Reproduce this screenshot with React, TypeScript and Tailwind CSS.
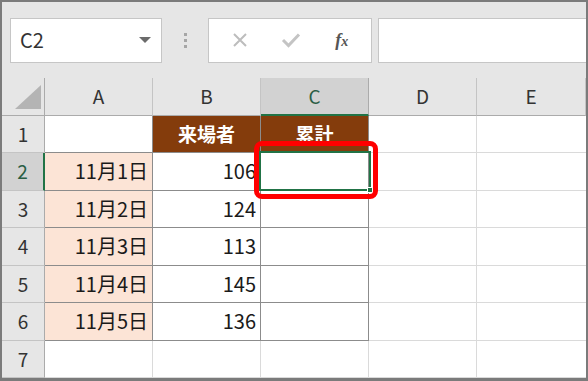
const font = { fontFamily: '"Noto Sans CJK JP", "Noto Sans", sans-serif' };

const cols = ['A', 'B', 'C', 'D', 'E'];

const rows = [
  { n: '1', a: '', b: '来場者', c: '累計' },
  { n: '2', a: '11月1日', b: '106', c: '' },
  { n: '3', a: '11月2日', b: '124', c: '' },
  { n: '4', a: '11月3日', b: '113', c: '' },
  { n: '5', a: '11月4日', b: '145', c: '' },
  { n: '6', a: '11月5日', b: '136', c: '' },
  { n: '7', a: '', b: '', c: '' },
];

function Toolbar() {
  return (
    <div className="h-[76px] flex items-center bg-[#e6e6e6] pl-[8px] shrink-0">
      {/* Name box */}
      <div className="w-[152px] h-[45px] bg-white border border-[#c6c6c6] flex items-center justify-between pl-[9px] pr-[10px]">
        <span className="text-[20px] text-[#333] leading-none">C2</span>
        <svg width="12" height="7" viewBox="0 0 12 7">
          <polygon points="0,0 12,0 6,6" fill="#6b6b6b" />
        </svg>
      </div>

      {/* Separator dots */}
      <div className="w-[46px] flex flex-col items-center gap-[3px]">
        <span className="w-[3px] h-[3px] bg-[#a6a6a6]" />
        <span className="w-[3px] h-[3px] bg-[#a6a6a6]" />
        <span className="w-[3px] h-[3px] bg-[#a6a6a6]" />
      </div>

      {/* Cancel / enter / fx */}
      <div className="w-[164px] h-[45px] bg-white border border-[#c6c6c6] flex items-center justify-around px-[6px]">
        <svg width="16" height="16" viewBox="0 0 16 16">
          <path d="M2 2 L14 14 M14 2 L2 14" stroke="#bdbdbd" strokeWidth="2" />
        </svg>
        <svg width="20" height="16" viewBox="0 0 20 16">
          <path d="M2 8 L7.5 13.5 L18 2.5" stroke="#c4c4c4" strokeWidth="3" fill="none" />
        </svg>
        <span className="text-[18px] italic font-bold text-[#555] leading-none" style={{ fontFamily: '"Liberation Serif", serif' }}>
          f<span className="text-[14px]">x</span>
        </span>
      </div>

      {/* Formula input */}
      <div className="flex-1 h-[45px] ml-[6px] bg-white border-y border-l border-[#c6c6c6]" />
    </div>
  );
}

function Grid() {
  return (
    <div className="relative flex-1 grid grid-cols-[43px_108px_108px_108px_108px_1fr] grid-rows-8 bg-white text-[#1a1a1a]">
      {/* Corner */}
      <div className="bg-[#e6e6e6] border-r border-b border-[#ababab] relative">
        <svg className="absolute left-[13px] top-[7px]" width="26" height="24" viewBox="0 0 26 24">
          <polygon points="26,0 26,24 0,24" fill="#b4b4b4" />
        </svg>
      </div>
      {cols.map((c) => (
        <div
          key={c}
          className={
            c === 'C'
              ? 'bg-[#d2d2d2] border-r border-[#ababab] border-b-2 border-b-[#217346] flex items-center justify-center text-[19px] text-[#2a5e45]'
              : 'bg-[#e6e6e6] border-r border-b border-[#c4c4c4] border-b-[#ababab] flex items-center justify-center text-[19px] text-[#333]'
          }
        >
          {c}
        </div>
      ))}

      {rows.map((r, i) => {
        const inTable = i >= 1 && i <= 5;
        const isHeader = i === 0;
        return [
          <div
            key={r.n + 'h'}
            className={
              r.n === '2'
                ? 'bg-[#d2d2d2] border-b border-[#c4c4c4] border-r-2 border-r-[#217346] flex items-center justify-center text-[19px] text-[#2a5e45]'
                : 'bg-[#e6e6e6] border-b border-[#c4c4c4] border-r border-r-[#ababab] flex items-center justify-center text-[19px] text-[#333]'
            }
          >
            {r.n}
          </div>,
          <div
            key={r.n + 'a'}
            className={
              inTable
                ? 'bg-[#fce4d6] border-r border-b border-[#8c8c8c] flex items-center justify-end pr-[4px] text-[20px]'
                : isHeader
                ? 'border-r border-b border-[#8c8c8c]'
                : 'border-r border-b border-[#dadada]'
            }
          >
            {r.a}
          </div>,
          <div
            key={r.n + 'b'}
            className={
              isHeader
                ? 'bg-[#843c0c] border-r border-b border-[#8c8c8c] flex items-center justify-center text-[19px] font-bold text-white'
                : inTable
                ? 'border-r border-b border-[#8c8c8c] flex items-center justify-end pr-[4px] text-[20px]'
                : 'border-r border-b border-[#dadada]'
            }
          >
            {r.b}
          </div>,
          <div
            key={r.n + 'c'}
            className={
              isHeader
                ? 'bg-[#843c0c] border-r border-b border-[#8c8c8c] flex items-center justify-center text-[19px] font-bold text-white'
                : inTable
                ? 'border-r border-b border-[#8c8c8c]'
                : 'border-r border-b border-[#dadada]'
            }
          >
            {r.c}
          </div>,
          <div key={r.n + 'd'} className="border-r border-b border-[#dadada]" />,
          <div key={r.n + 'e'} className="border-b border-[#dadada]" />,
        ];
      })}

      {/* Active cell C2 */}
      <div className="absolute left-[257px] top-[73px] w-[112px] h-[40px] border-2 border-[#217346]">
        <span className="absolute right-[-4px] bottom-[-4px] w-[6px] h-[6px] bg-[#217346] border border-white" />
      </div>

      {/* Red highlight */}
      <div className="absolute left-[252px] top-[63px] w-[124px] h-[58px] border-[5px] border-[#f00] rounded-[8px]" />
    </div>
  );
}

export default function App() {
  return (
    <div className="w-[588px] h-[381px] border-2 border-b-[3px] border-[#7b7b7b] flex flex-col overflow-hidden" style={font}>
      <Toolbar />
      <Grid />
    </div>
  );
}
